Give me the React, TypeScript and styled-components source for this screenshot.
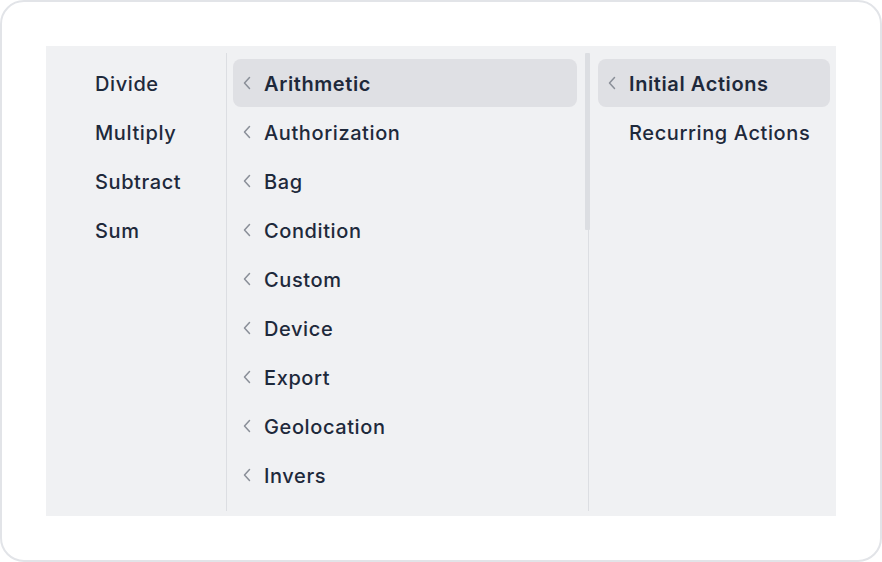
import React from "react";
import styled, { createGlobalStyle } from "styled-components";

const Global = createGlobalStyle`
  html, body { margin: 0; padding: 0; background: #ffffff; }
  body { font-family: Inter, "Noto Sans", sans-serif; }
  * { box-sizing: border-box; }
`;

const Card = styled.div`
  width: 882px;
  height: 562px;
  border: 2px solid #e2e4e8;
  border-radius: 24px;
  background: #ffffff;
  padding: 44px;
`;

const Panel = styled.div`
  display: flex;
  width: 790px;
  height: 470px;
  background: #f0f1f3;
`;

const Column = styled.div<{ $width: number; $padL: number; $padR: number }>`
  width: ${(p) => p.$width}px;
  flex: none;
  display: flex;
  flex-direction: column;
  gap: 1px;
  padding: 13px ${(p) => p.$padR}px 0 ${(p) => p.$padL}px;
  overflow: hidden;
`;

const Divider = styled.div`
  position: relative;
  width: 1px;
  flex: none;
  margin: 7px 0 5px;
  background: #dcdee2;
`;

const Thumb = styled.div`
  position: absolute;
  top: 0;
  left: -3px;
  width: 5px;
  height: 177px;
  border-radius: 1px;
  background: #dcdee2;
`;

const Item = styled.div<{ $active?: boolean; $indent?: number }>`
  display: flex;
  align-items: center;
  gap: 13px;
  height: 48px;
  flex: none;
  padding-top: 1px;
  padding-left: ${(p) => p.$indent ?? 10}px;
  border-radius: 8px;
  background: ${(p) => (p.$active ? "#dfe0e4" : "transparent")};
  color: #1e293b;
  font-size: 20px;
  font-weight: ${(p) => (p.$active ? 600 : 500)};
  white-space: nowrap;
`;

const Label = styled.span`
  line-height: 24px;
  letter-spacing: 0.6px;
`;

const Chevron = () => (
  <svg width="8" height="14" viewBox="0 0 8 14" fill="none" style={{ flex: "none", marginTop: -1 }}>
    <path d="M6.5 1.5 L1.5 7 L6.5 12.5" stroke="#8a8f98" strokeWidth="1.5" strokeLinecap="round" strokeLinejoin="round" />
  </svg>
);

const ops = ["Divide", "Multiply", "Subtract", "Sum"];
const cats = [
  "Arithmetic",
  "Authorization",
  "Bag",
  "Condition",
  "Custom",
  "Device",
  "Export",
  "Geolocation",
  "Invers",
];
const phases = ["Initial Actions", "Recurring Actions"];

export default function App() {
  return (
    <>
      <Global />
      <Card>
        <Panel>
          <Column $width={180} $padL={0} $padR={0}>
            {ops.map((o) => (
              <Item key={o} $indent={49}>
                <Label>{o}</Label>
              </Item>
            ))}
          </Column>
          <Divider />
          <Column $width={361} $padL={6} $padR={11}>
            {cats.map((c, i) => (
              <Item key={c} $active={i === 0}>
                <Chevron />
                <Label>{c}</Label>
              </Item>
            ))}
          </Column>
          <Divider>
            <Thumb />
          </Divider>
          <Column $width={247} $padL={9} $padR={6}>
            {phases.map((p, i) => (
              <Item key={p} $active={i === 0} $indent={i === 0 ? 10 : 31}>
                {i === 0 && <Chevron />}
                <Label>{p}</Label>
              </Item>
            ))}
          </Column>
        </Panel>
      </Card>
    </>
  );
}
